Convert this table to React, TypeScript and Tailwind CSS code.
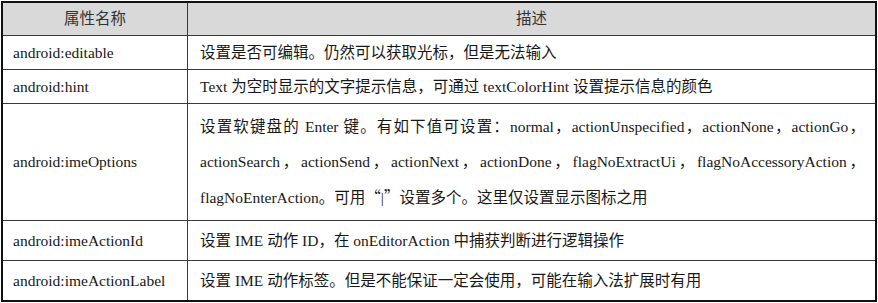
import React from "react";

const font = { fontFamily: '"Liberation Serif", "Noto Sans CJK SC", serif' };

function Row({
  name,
  children,
  h,
  last,
}: {
  name: string;
  children: React.ReactNode;
  h: string;
  last?: boolean;
}) {
  return (
    <div className={`flex ${h} ${last ? "" : "border-b border-[#3a3a3a]"}`}>
      <div className="w-[185px] shrink-0 border-r border-[#3a3a3a] flex items-center pl-[10px]">
        {name}
      </div>
      <div className="flex-1 min-w-0 flex flex-col justify-center pl-[12px] pr-[10px]">{children}</div>
    </div>
  );
}

export default function App() {
  return (
    <div className="w-[878px] h-[303px] bg-white pt-[1px] pl-[1px]" style={font}>
      <div className="w-[876px] h-[301px] border-2 border-[#111] text-[15.5px] text-[#181818] leading-none">
        <div className="flex h-[33px] bg-[#d9d9d9] border-b border-[#3a3a3a] text-[#333]">
          <div className="w-[185px] shrink-0 border-r border-[#3a3a3a] flex items-center justify-center">
            属性名称
          </div>
          <div className="flex-1 flex items-center justify-center">描述</div>
        </div>
        <Row name="android:editable" h="h-[34px]">
          <div>设置是否可编辑。仍然可以获取光标，但是无法输入</div>
        </Row>
        <Row name="android:hint" h="h-[34px]">
          <div>Text 为空时显示的文字提示信息，可通过 textColorHint 设置提示信息的颜色</div>
        </Row>
        <Row name="android:imeOptions" h="h-[117px]">
          <div className="leading-[35px] h-[35px] overflow-hidden whitespace-nowrap text-justify [text-align-last:justify] -mt-[2px]">
            设置软键盘的 Enter 键。有如下值可设置：normal，actionUnspecified，actionNone，actionGo，
          </div>
          <div className="leading-[35px] h-[35px] overflow-hidden whitespace-nowrap text-justify [text-align-last:justify]">
            actionSearch，actionSend，actionNext，actionDone，flagNoExtractUi，flagNoAccessoryAction，
          </div>
          <div className="leading-[35px] h-[35px] whitespace-nowrap">
            flagNoEnterAction。可用<span style={{ fontFamily: '"Noto Sans CJK SC", sans-serif' }}>“</span>|
            <span style={{ fontFamily: '"Noto Sans CJK SC", sans-serif' }}>”</span>设置多个。这里仅设置显示图标之用
          </div>
        </Row>
        <Row name="android:imeActionId" h="h-[40px]">
          <div>设置 IME 动作 ID，在 onEditorAction 中捕获判断进行逻辑操作</div>
        </Row>
        <Row name="android:imeActionLabel" h="h-[39px]" last>
          <div>设置 IME 动作标签。但是不能保证一定会使用，可能在输入法扩展时有用</div>
        </Row>
      </div>
    </div>
  );
}
